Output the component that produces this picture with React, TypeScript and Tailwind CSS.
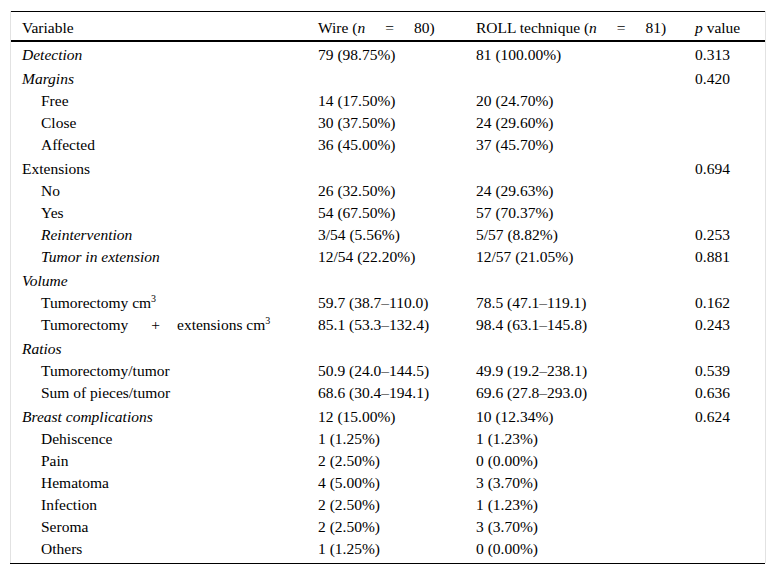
import React from "react";

type Row = {
  label: React.ReactNode;
  wire?: string;
  roll?: string;
  p?: string;
  italic?: boolean;
  indent?: boolean;
  groupStart?: boolean;
};

const Cm3 = () => (
  <>
    cm<span className="text-[10px] relative -top-[6px] align-baseline">3</span>
  </>
);

const rows: Row[] = [
  { label: "Detection", wire: "79 (98.75%)", roll: "81 (100.00%)", p: "0.313", italic: true },
  { label: "Margins", p: "0.420", italic: true, groupStart: true },
  { label: "Free", wire: "14 (17.50%)", roll: "20 (24.70%)", indent: true },
  { label: "Close", wire: "30 (37.50%)", roll: "24 (29.60%)", indent: true },
  { label: "Affected", wire: "36 (45.00%)", roll: "37 (45.70%)", indent: true },
  { label: "Extensions", p: "0.694", groupStart: true },
  { label: "No", wire: "26 (32.50%)", roll: "24 (29.63%)", indent: true },
  { label: "Yes", wire: "54 (67.50%)", roll: "57 (70.37%)", indent: true },
  { label: "Reintervention", wire: "3/54 (5.56%)", roll: "5/57 (8.82%)", p: "0.253", indent: true, italic: true },
  { label: "Tumor in extension", wire: "12/54 (22.20%)", roll: "12/57 (21.05%)", p: "0.881", indent: true, italic: true },
  { label: "Volume", italic: true, groupStart: true },
  {
    label: (
      <>
        Tumorectomy <Cm3 />
      </>
    ),
    wire: "59.7 (38.7–110.0)",
    roll: "78.5 (47.1–119.1)",
    p: "0.162",
    indent: true,
  },
  {
    label: (
      <>
        Tumorectomy<span className="inline-block ml-[23px] mr-[17px]">+</span>extensions <Cm3 />
      </>
    ),
    wire: "85.1 (53.3–132.4)",
    roll: "98.4 (63.1–145.8)",
    p: "0.243",
    indent: true,
  },
  { label: "Ratios", italic: true, groupStart: true },
  { label: "Tumorectomy/tumor", wire: "50.9 (24.0–144.5)", roll: "49.9 (19.2–238.1)", p: "0.539", indent: true },
  { label: "Sum of pieces/tumor", wire: "68.6 (30.4–194.1)", roll: "69.6 (27.8–293.0)", p: "0.636", indent: true },
  { label: "Breast complications", wire: "12 (15.00%)", roll: "10 (12.34%)", p: "0.624", italic: true, groupStart: true },
  { label: "Dehiscence", wire: "1 (1.25%)", roll: "1 (1.23%)", indent: true },
  { label: "Pain", wire: "2 (2.50%)", roll: "0 (0.00%)", indent: true },
  { label: "Hematoma", wire: "4 (5.00%)", roll: "3 (3.70%)", indent: true },
  { label: "Infection", wire: "2 (2.50%)", roll: "1 (1.23%)", indent: true },
  { label: "Seroma", wire: "2 (2.50%)", roll: "3 (3.70%)", indent: true },
  { label: "Others", wire: "1 (1.25%)", roll: "0 (0.00%)", indent: true },
];

export default function App() {
  return (
    <div
      className="bg-white w-[776px] h-[577px] pt-[11px] text-black text-[15.5px] leading-none font-['Liberation_Serif','Times_New_Roman',serif]"
    >
      <div className="ml-[10px] w-[756px] border-x border-x-[#e2e2e2]">
        <div className="border-t border-black">
          <div className="grid grid-cols-[296px_158px_219px_1fr] items-start h-[30px] pt-[8px] pl-[11px] border-b-2 border-black">
            <div>Variable</div>
            <div>
              Wire (<i>n</i>
              <span className="inline-block mx-[20px]">=</span>80)
            </div>
            <div>
              ROLL technique (<i>n</i>
              <span className="inline-block mx-[20px]">=</span>81)
            </div>
            <div>
              <i>p</i> value
            </div>
          </div>
          <div className="pb-[5px]">
            {rows.map((r, i) => (
              <div
                key={i}
                className={`grid grid-cols-[296px_158px_219px_1fr] items-start h-[22px] pt-[5px] pl-[11px] ${
                  r.groupStart ? "mt-[2px]" : ""
                }`}
              >
                <div className={`${r.indent ? "pl-[19px]" : ""} ${r.italic ? "italic" : ""} whitespace-nowrap`}>
                  {r.label}
                </div>
                <div className="whitespace-nowrap">{r.wire ?? ""}</div>
                <div className="whitespace-nowrap">{r.roll ?? ""}</div>
                <div className="whitespace-nowrap">{r.p ?? ""}</div>
              </div>
            ))}
          </div>
        </div>
      </div>
      <div className="ml-[10px] w-[755px] h-px bg-black" />
    </div>
  );
}
